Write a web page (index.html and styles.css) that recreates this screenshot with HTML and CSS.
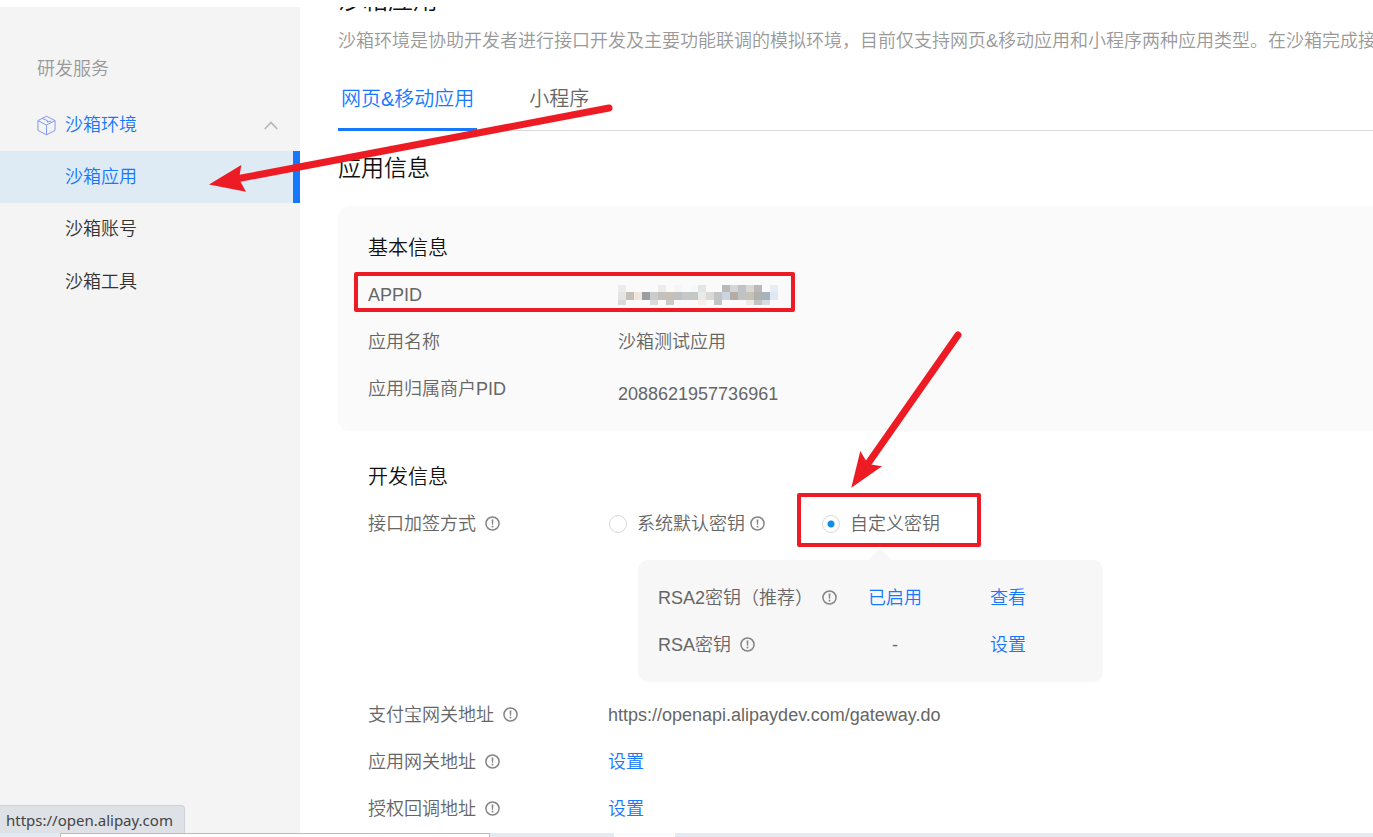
FILE: index.html
```html
<!DOCTYPE html>
<html lang="zh-CN">
<head>
<meta charset="utf-8">
<title>沙箱应用</title>
<link rel="stylesheet" href="styles.css">
</head>
<body>
<svg class="defs" aria-hidden="true">
  <symbol id="info" viewBox="0 0 16 16">
    <circle cx="8" cy="8" r="7" fill="none" stroke="#858585" stroke-width="1.6"/>
    <path d="M7 3.7h2L8.6 9.3H7.400z" fill="#858585"/>
    <rect x="7.1" y="10.4" width="1.8" height="1.8" fill="#858585"/>
  </symbol>
</svg>
<div class="app">
  <div class="body">
    <nav class="sidebar">
      <div class="group">研发服务</div>
      <button class="parent" type="button" aria-expanded="true">
        <svg class="cube" viewBox="0 0 20 22" fill="none" stroke="#7b93f7" stroke-width="1"><path d="M10 1.200 19 5.800v10.400L10 20.800 1 16.200V5.800zM1 5.800l9 4.800 9-4.800M10 10.600v10.200M5.600 3.500l5.400 2.400v1.600l4-1.200"/></svg>
        <span>沙箱环境</span>
        <svg class="chevron" viewBox="0 0 14 9" fill="none" stroke="#b3b3bd" stroke-width="1.6"><path d="M.7 8 7 1.500 13.300 8"/></svg>
      </button>
      <a class="item active" href="#app">沙箱应用</a>
      <a class="item" href="#account">沙箱账号</a>
      <a class="item" href="#tools">沙箱工具</a>
    </nav>
    <main class="main">
      <h1 class="title">沙箱应用</h1>
      <p class="desc">沙箱环境是协助开发者进行接口开发及主要功能联调的模拟环境，目前仅支持网页&amp;移动应用和小程序两种应用类型。在沙箱完成接口调</p>
      <div class="tabs" role="tablist">
        <button class="tab selected" type="button" role="tab" aria-selected="true">网页&amp;移动应用</button>
        <button class="tab" type="button" role="tab" aria-selected="false">小程序</button>
      </div>
      <h2 class="heading">应用信息</h2>
      <section class="card">
        <h3 class="subheading">基本信息</h3>
        <div class="row">
          <span class="label">APPID</span>
          <svg class="mosaic" viewBox="0 0 160 20" shape-rendering="crispEdges">
            <path fill="#ececea" d="M0 0h8v7H0zM40 0h8v7h-8z"/><path fill="#f7f6f4" d="M56 0h8v7h-8z"/><path fill="#f4fafa" d="M72 0h8v7h-8z"/><path fill="#e4e4e4" d="M80 0h8v7h-8z"/>
            <path fill="#b9b9b9" d="M104 0h8v7h-8zM136 0h8v7h-8z"/><path fill="#d2d6da" d="M112 0h8v7h-8z"/><path fill="#bfc3c6" d="M120 0h8v7h-8z"/><path fill="#dbd7d3" d="M128 0h8v7h-8z"/><path fill="#e7edf6" d="M152 0h8v7h-8z"/>
            <path fill="#e4e4e6" d="M0 7h8v8H0z"/><path fill="#c4bfb9" d="M8 7h8v8H8z"/><path fill="#f0e4db" d="M16 7h8v8h-8z"/><path fill="#9c9d9e" d="M24 7h8v8h-8z"/><path fill="#cbcccb" d="M32 7h8v8h-8z"/><path fill="#c4c0c1" d="M40 7h8v8h-8z"/><path fill="#c9c0b5" d="M48 7h8v8h-8z"/><path fill="#bdc1c6" d="M56 7h8v8h-8z"/><path fill="#c6c8c7" d="M64 7h16v8H64z"/><path fill="#e7ebea" d="M80 7h8v8h-8z"/><path fill="#d9d9d5" d="M88 7h8v8h-8z"/><path fill="#c2c4c4" d="M96 7h8v8h-8z"/><path fill="#cbd5e0" d="M104 7h8v8h-8z"/><path fill="#b5aca7" d="M112 7h8v8h-8z"/><path fill="#bfc3c6" d="M120 7h8v8h-8z"/><path fill="#c7c2b6" d="M128 7h8v8h-8z"/><path fill="#b1b2af" d="M136 7h8v8h-8z"/><path fill="#a7b2bd" d="M144 7h8v8h-8z"/><path fill="#dfe8f2" d="M152 7h8v8h-8z"/>
            <path fill="#dadada" d="M0 15h8v5H0zM32 15h8v5h-8z"/><path fill="#cccac6" d="M48 15h8v5h-8z"/><path fill="#fbeee5" d="M80 15h8v5h-8z"/><path fill="#c2c4c4" d="M96 15h8v5h-8zM136 15h8v5h-8z"/><path fill="#eeeae5" d="M128 15h8v5h-8z"/><path fill="#d7dce0" d="M144 15h8v5h-8z"/>
          </svg>
        </div>
        <div class="row"><span class="label">应用名称</span><span>沙箱测试应用</span></div>
        <div class="row"><span class="label">应用归属商户PID</span><span class="pid">2088621957736961</span></div>
      </section>
      <section class="dev">
        <h3 class="subheading">开发信息</h3>
        <div class="row">
          <span class="label">接口加签方式<svg class="info"><use href="#info"/></svg></span>
          <span class="option"><input class="radio" type="radio" name="sign" id="sys"><label for="sys">系统默认密钥</label><svg class="info"><use href="#info"/></svg></span>
          <span class="option"><input class="radio" type="radio" name="sign" id="custom" checked><label for="custom">自定义密钥</label></span>
        </div>
        <div class="panel">
          <div class="row"><span class="key">RSA2密钥（推荐）<svg class="info"><use href="#info"/></svg></span><span class="state on">已启用</span><a class="link" href="#view">查看</a></div>
          <div class="row"><span class="key">RSA密钥<svg class="info"><use href="#info"/></svg></span><span class="state">-</span><a class="link" href="#set">设置</a></div>
        </div>
        <div class="row"><span class="label">支付宝网关地址<svg class="info"><use href="#info"/></svg></span><span>https://openapi.alipaydev.com/gateway.do</span></div>
        <div class="row"><span class="label">应用网关地址<svg class="info"><use href="#info"/></svg></span><a class="link" href="#gateway">设置</a></div>
        <div class="row"><span class="label">授权回调地址<svg class="info"><use href="#info"/></svg></span><a class="link" href="#callback">设置</a></div>
      </section>
    </main>
    <div class="status">https://open.alipay.com</div>
  </div>
  <div class="taskbar"><span class="field"></span><span class="chip"></span></div>
</div>
<svg class="marks" width="1373" height="837" viewBox="0 0 1373 837" fill="none" stroke="#ed1c24" aria-hidden="true">
  <rect x="356" y="274" width="437" height="36" stroke-width="4" stroke-linejoin="round"/>
  <rect x="799" y="495" width="180" height="50" stroke-width="4" stroke-linejoin="round"/>
  <path d="M609 108 236 179M958 335 867 465" stroke-width="7" stroke-linecap="round"/>
  <path d="M209 184.600 241.300 165 239 179 246 191.700zM851.300 487.700 860.300 451 868 464 882 466.300z" fill="#ed1c24" stroke="none"/>
</svg>
</body>
</html>
```
FILE: styles.css
```css
* { box-sizing: border-box; }
body {
  margin: 0;
  background: #fff;
  color: #666;
  font: 350 18px/26px "Liberation Sans", "Noto Sans CJK SC", sans-serif;
  overflow: hidden;
}
h1, h2, h3, p { margin: 0; font-weight: 350; }
a { color: inherit; text-decoration: none; }
button { border: 0; padding: 0; background: none; color: inherit; font: inherit; }
.defs { display: none; }

.app { position: relative; height: 100vh; padding-top: 7px; display: flex; flex-direction: column; }
.body { position: relative; flex: 1; min-height: 0; display: flex; overflow: hidden; }

.sidebar { flex: 0 0 300px; padding-top: 49px; background: #f4f4f4; color: #333; }
.group { margin-bottom: 17px; padding-left: 37px; color: #999; }
.parent { display: flex; align-items: center; width: 100%; height: 52px; padding: 0 22px 0 37px; color: #1677ff; }
.cube { width: 19px; height: 21px; margin-right: 9px; }
.chevron { width: 14px; height: 9px; margin-left: auto; }
.item { display: block; padding-left: 65px; line-height: 53px; }
.item.active { height: 52px; background: #deebf5; color: #1677ff; border-right: 7px solid #1677ff; }

.main { flex: 1; min-width: 0; padding-left: 38px; overflow: hidden; }
.title { margin-top: -23px; font-size: 25px; line-height: 32px; color: #111; }
.desc { margin-top: 12px; color: #999; white-space: nowrap; }
.tabs { display: flex; gap: 49px; margin-top: 29px; border-bottom: 1px solid #d9d9d9; }
.tab { margin-bottom: -1px; padding: 0 3px 13px; border-bottom: 3px solid transparent; font-size: 20px; line-height: 32px; }
.tab.selected { color: #1677ff; border-color: #1677ff; }
.heading { margin-top: 21px; font-size: 23px; line-height: 32px; color: #111; }
.subheading { margin-bottom: 9px; font-size: 20px; line-height: 28px; color: #111; }

.card { margin-top: 22px; padding: 28px 0 19px 30px; border-radius: 12px 0 0 12px; background: #fafafa; }
.row { display: flex; align-items: center; height: 47px; }
.label { display: flex; align-items: center; flex: 0 0 240px; }
.card .label { flex-basis: 250px; }
.mosaic { width: 160px; height: 20px; }
.pid { padding-top: 10px; }

.dev { padding: 32px 0 0 30px; }
.info { width: 15px; height: 15px; margin-left: 9px; }
.option { display: flex; align-items: center; min-width: 213px; }
.radio {
  appearance: none; width: 18px; height: 18px; margin: 0 10px 0 1px;
  border: 1px solid #d9d9d9; border-radius: 50%; background: #fff;
}
.radio:checked { background: radial-gradient(circle, #108ee9 3px, #fff 4px); }
.option .info { margin-left: 5px; }
.link, .on { color: #1677ff; }

.panel { position: relative; max-width: 465px; margin: 13px 0 9px 270px; padding: 14px 20px; border-radius: 10px; background: #f7f7f7; }
.panel::before {
  content: ""; position: absolute; left: 230px; top: -12px;
  border: solid transparent; border-width: 0 12px 12px; border-bottom-color: #f7f7f7;
}
.key { display: flex; align-items: center; flex: 0 0 210px; }
.state { width: 54px; margin-right: 68px; text-align: center; }

.status {
  position: absolute; left: 0; bottom: 0; padding: 2px 11px 0 6px; border: solid #cfd2d6; border-width: 1px 1px 0 0;
  border-radius: 0 4px 0 0; background: #dee1e6; color: #444; font: 400 15px/25px "Noto Sans", "Open Sans", sans-serif;
}
.taskbar { display: flex; flex: 0 0 4px; padding-left: 60px; background: #e3eaf2; }
.field { width: 430px; border: solid #bbb; border-width: 1px 1px 0; background: #fff; }
.chip { width: 61px; margin-left: 124px; background: #f9fbfd; }
.marks { position: absolute; left: 0; top: 0; pointer-events: none; }
```
